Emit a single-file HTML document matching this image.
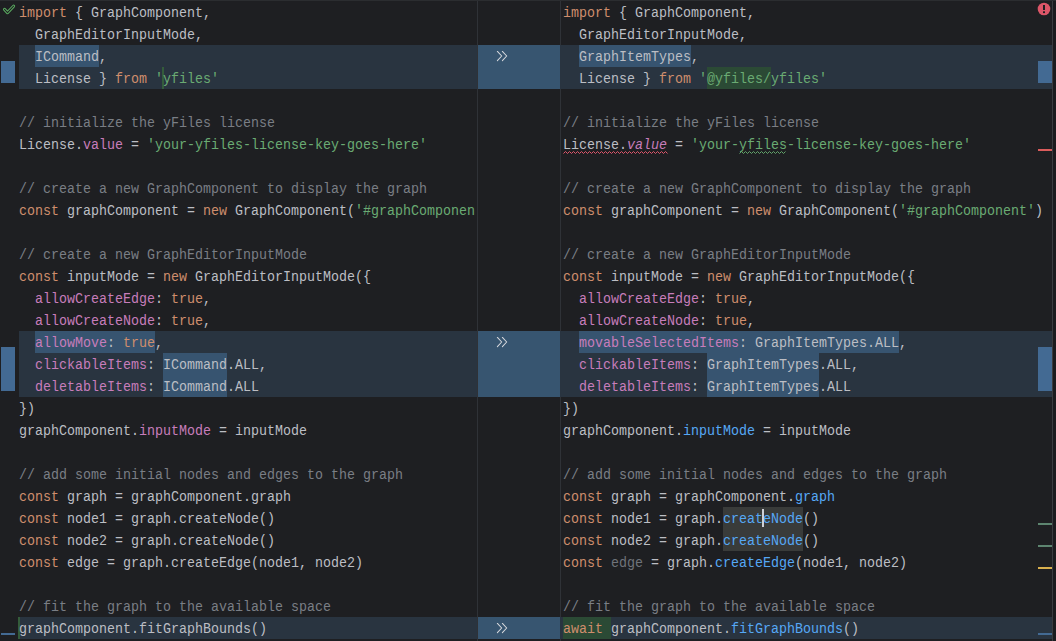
<!DOCTYPE html>
<html><head><meta charset="utf-8"><style>
html,body{margin:0;padding:0;}
body{width:1056px;height:641px;overflow:hidden;background:#1e1f22;position:relative;}
#bg div{position:absolute;}
.pane{position:absolute;top:0;height:641px;overflow:hidden;}
.ln{position:absolute;left:0;height:22px;line-height:22px;transform:translateY(2px) scaleY(1.12);transform-origin:0 15px;white-space:pre;font-family:"Liberation Mono",monospace;font-size:13.333px;color:#bcbec4;}
.ln span{}
.t{color:#bcbec4} .k{color:#cf8e6d} .s{color:#6aab73} .c{color:#7a7e85} .p{color:#c77dbb} .f{color:#56a8f5} .u{color:#6f737a}
.i{color:#c77dbb;font-style:italic}
</style></head><body>
<div id="bg"><div style="left:19px;top:45px;width:458px;height:44px;background:#293440;"></div><div style="left:560px;top:45px;width:492px;height:44px;background:#293440;"></div><div style="left:478px;top:45px;width:82px;height:44px;background:#375570;"></div><div style="left:19px;top:331px;width:458px;height:66px;background:#293440;"></div><div style="left:560px;top:331px;width:492px;height:66px;background:#293440;"></div><div style="left:478px;top:331px;width:82px;height:66px;background:#375570;"></div><div style="left:19px;top:617px;width:458px;height:22px;background:#293440;"></div><div style="left:560px;top:617px;width:492px;height:22px;background:#293440;"></div><div style="left:478px;top:617px;width:82px;height:22px;background:#375570;"></div><div style="left:35px;top:45px;width:64px;height:22px;background:#375470;"></div><div style="left:35px;top:331px;width:120px;height:22px;background:#375470;"></div><div style="left:163px;top:353px;width:64px;height:22px;background:#375470;"></div><div style="left:163px;top:375px;width:64px;height:22px;background:#375470;"></div><div style="left:579px;top:45px;width:112px;height:22px;background:#375470;"></div><div style="left:707px;top:67px;width:64px;height:22px;background:#2b4a35;"></div><div style="left:579px;top:331px;width:320px;height:22px;background:#375470;"></div><div style="left:707px;top:353px;width:112px;height:22px;background:#375470;"></div><div style="left:707px;top:375px;width:112px;height:22px;background:#375470;"></div><div style="left:723px;top:507px;width:80px;height:22px;background:#393b3a;"></div><div style="left:723px;top:529px;width:80px;height:22px;background:#393b3a;"></div><div style="left:563px;top:617px;width:48px;height:22px;background:#2b4a35;"></div><div style="left:162px;top:67px;width:2px;height:22px;background:#345c3b;"></div><div style="left:18px;top:617px;width:2px;height:22px;background:#345c3b;"></div><div style="left:477px;top:0px;width:1px;height:641px;background:#2f3237;"></div><div style="left:560px;top:0px;width:1px;height:641px;background:#2f3237;"></div><div style="left:1052px;top:0px;width:1px;height:641px;background:#3a3c40;"></div><div style="left:1053px;top:0px;width:3px;height:641px;background:#1b1c1f;"></div><div style="left:560px;top:45px;width:1px;height:44px;background:#293440;"></div><div style="left:560px;top:331px;width:1px;height:66px;background:#293440;"></div><div style="left:560px;top:617px;width:1px;height:22px;background:#293440;"></div><div style="left:0px;top:0px;width:1056px;height:1px;background:#2b2d30;"></div><div style="left:1px;top:61px;width:14px;height:22px;background:#436a93;"></div><div style="left:1px;top:347px;width:14px;height:44px;background:#436a93;"></div><div style="left:1px;top:633px;width:14px;height:2px;background:#436a93;"></div><div style="left:1038px;top:61px;width:14px;height:22px;background:#436a93;"></div><div style="left:1038px;top:347px;width:14px;height:44px;background:#436a93;"></div><div style="left:1038px;top:633px;width:14px;height:2px;background:#436a93;"></div><div style="left:1038px;top:149px;width:14px;height:2px;background:#db5c5c;"></div><div style="left:1038px;top:523px;width:14px;height:2px;background:#5d8570;"></div><div style="left:1038px;top:545px;width:14px;height:2px;background:#5d8570;"></div><div style="left:1038px;top:567px;width:14px;height:2px;background:#d9b04e;"></div></div>
<div class="pane" style="left:19px;width:456px"><div class="ln" style="top:1px"><span class="k">import</span><span class="t"> { GraphComponent,</span></div><div class="ln" style="top:23px"><span class="t">  GraphEditorInputMode,</span></div><div class="ln" style="top:45px"><span class="t">  ICommand,</span></div><div class="ln" style="top:67px"><span class="t">  License } </span><span class="k">from</span><span class="t"> </span><span class="s">&#x27;yfiles&#x27;</span></div><div class="ln" style="top:111px"><span class="c">// initialize the yFiles license</span></div><div class="ln" style="top:133px"><span class="t">License.</span><span class="p">value</span><span class="t"> = </span><span class="s">&#x27;your-yfiles-license-key-goes-here&#x27;</span></div><div class="ln" style="top:177px"><span class="c">// create a new GraphComponent to display the graph</span></div><div class="ln" style="top:199px"><span class="k">const</span><span class="t"> graphComponent = </span><span class="k">new</span><span class="t"> GraphComponent(</span><span class="s">&#x27;#graphComponent&#x27;</span><span class="t">)</span></div><div class="ln" style="top:243px"><span class="c">// create a new GraphEditorInputMode</span></div><div class="ln" style="top:265px"><span class="k">const</span><span class="t"> inputMode = </span><span class="k">new</span><span class="t"> GraphEditorInputMode({</span></div><div class="ln" style="top:287px"><span class="t">  </span><span class="p">allowCreateEdge</span><span class="t">: </span><span class="k">true</span><span class="t">,</span></div><div class="ln" style="top:309px"><span class="t">  </span><span class="p">allowCreateNode</span><span class="t">: </span><span class="k">true</span><span class="t">,</span></div><div class="ln" style="top:331px"><span class="t">  </span><span class="p">allowMove</span><span class="t">: </span><span class="k">true</span><span class="t">,</span></div><div class="ln" style="top:353px"><span class="t">  </span><span class="p">clickableItems</span><span class="t">: ICommand.ALL,</span></div><div class="ln" style="top:375px"><span class="t">  </span><span class="p">deletableItems</span><span class="t">: ICommand.ALL</span></div><div class="ln" style="top:397px"><span class="t">})</span></div><div class="ln" style="top:419px"><span class="t">graphComponent.</span><span class="p">inputMode</span><span class="t"> = inputMode</span></div><div class="ln" style="top:463px"><span class="c">// add some initial nodes and edges to the graph</span></div><div class="ln" style="top:485px"><span class="k">const</span><span class="t"> graph = graphComponent.graph</span></div><div class="ln" style="top:507px"><span class="k">const</span><span class="t"> node1 = graph.createNode()</span></div><div class="ln" style="top:529px"><span class="k">const</span><span class="t"> node2 = graph.createNode()</span></div><div class="ln" style="top:551px"><span class="k">const</span><span class="t"> edge = graph.createEdge(node1, node2)</span></div><div class="ln" style="top:595px"><span class="c">// fit the graph to the available space</span></div><div class="ln" style="top:617px"><span class="t">graphComponent.fitGraphBounds()</span></div></div>
<div class="pane" style="left:563px;width:489px"><div class="ln" style="top:1px"><span class="k">import</span><span class="t"> { GraphComponent,</span></div><div class="ln" style="top:23px"><span class="t">  GraphEditorInputMode,</span></div><div class="ln" style="top:45px"><span class="t">  GraphItemTypes,</span></div><div class="ln" style="top:67px"><span class="t">  License } </span><span class="k">from</span><span class="t"> </span><span class="s">&#x27;@yfiles/yfiles&#x27;</span></div><div class="ln" style="top:111px"><span class="c">// initialize the yFiles license</span></div><div class="ln" style="top:133px"><span class="t">License.</span><span class="i">value</span><span class="t"> = </span><span class="s">&#x27;your-yfiles-license-key-goes-here&#x27;</span></div><div class="ln" style="top:177px"><span class="c">// create a new GraphComponent to display the graph</span></div><div class="ln" style="top:199px"><span class="k">const</span><span class="t"> graphComponent = </span><span class="k">new</span><span class="t"> GraphComponent(</span><span class="s">&#x27;#graphComponent&#x27;</span><span class="t">)</span></div><div class="ln" style="top:243px"><span class="c">// create a new GraphEditorInputMode</span></div><div class="ln" style="top:265px"><span class="k">const</span><span class="t"> inputMode = </span><span class="k">new</span><span class="t"> GraphEditorInputMode({</span></div><div class="ln" style="top:287px"><span class="t">  </span><span class="p">allowCreateEdge</span><span class="t">: </span><span class="k">true</span><span class="t">,</span></div><div class="ln" style="top:309px"><span class="t">  </span><span class="p">allowCreateNode</span><span class="t">: </span><span class="k">true</span><span class="t">,</span></div><div class="ln" style="top:331px"><span class="t">  </span><span class="p">movableSelectedItems</span><span class="t">: GraphItemTypes.ALL,</span></div><div class="ln" style="top:353px"><span class="t">  </span><span class="p">clickableItems</span><span class="t">: GraphItemTypes.ALL,</span></div><div class="ln" style="top:375px"><span class="t">  </span><span class="p">deletableItems</span><span class="t">: GraphItemTypes.ALL</span></div><div class="ln" style="top:397px"><span class="t">})</span></div><div class="ln" style="top:419px"><span class="t">graphComponent.</span><span class="f">inputMode</span><span class="t"> = inputMode</span></div><div class="ln" style="top:463px"><span class="c">// add some initial nodes and edges to the graph</span></div><div class="ln" style="top:485px"><span class="k">const</span><span class="t"> graph = graphComponent.</span><span class="f">graph</span></div><div class="ln" style="top:507px"><span class="k">const</span><span class="t"> node1 = graph.</span><span class="f">createNode</span><span class="t">()</span></div><div class="ln" style="top:529px"><span class="k">const</span><span class="t"> node2 = graph.</span><span class="f">createNode</span><span class="t">()</span></div><div class="ln" style="top:551px"><span class="k">const</span><span class="t"> </span><span class="u">edge</span><span class="t"> = graph.</span><span class="f">createEdge</span><span class="t">(node1, node2)</span></div><div class="ln" style="top:595px"><span class="c">// fit the graph to the available space</span></div><div class="ln" style="top:617px"><span class="k">await</span><span class="t"> graphComponent.</span><span class="f">fitGraphBounds</span><span class="t">()</span></div></div>
<svg style="position:absolute;left:496px;top:51px" width="12" height="11" viewBox="0 0 12 11"><path d="M1.4 0.4 L5.7 5 L1.4 9.6 M6.4 0.4 L10.7 5 L6.4 9.6" fill="none" stroke="#d8dade" stroke-width="1.05" stroke-linecap="round" stroke-linejoin="round"/></svg><svg style="position:absolute;left:496px;top:337px" width="12" height="11" viewBox="0 0 12 11"><path d="M1.4 0.4 L5.7 5 L1.4 9.6 M6.4 0.4 L10.7 5 L6.4 9.6" fill="none" stroke="#d8dade" stroke-width="1.05" stroke-linecap="round" stroke-linejoin="round"/></svg><svg style="position:absolute;left:496px;top:623px" width="12" height="11" viewBox="0 0 12 11"><path d="M1.4 0.4 L5.7 5 L1.4 9.6 M6.4 0.4 L10.7 5 L6.4 9.6" fill="none" stroke="#d8dade" stroke-width="1.05" stroke-linecap="round" stroke-linejoin="round"/></svg>
<svg style="position:absolute;left:0px;top:0px" width="18" height="18" viewBox="0 0 18 18"><path d="M4.5 9.4 L7.5 12.6 L13.6 6.2" fill="none" stroke="#5cae62" stroke-width="3.0" stroke-linecap="round" stroke-linejoin="round"/><path d="M4.5 9.4 L7.5 12.6 L13.6 6.2" fill="none" stroke="#1e1f22" stroke-width="1.1" stroke-linecap="round" stroke-linejoin="round"/></svg><svg style="position:absolute;left:1037px;top:2px" width="14" height="14" viewBox="0 0 14 14"><circle cx="7" cy="7" r="6.3" fill="#dc5668"/><rect x="6" y="3" width="2" height="5" fill="#1e1f22"/><rect x="6" y="9.3" width="2" height="1.8" fill="#1e1f22"/></svg><div style="left:762px;top:509px;width:2px;height:18px;background:#ced0d6;position:absolute;"></div><svg style="position:absolute;left:563px;top:150px" width="105" height="5" viewBox="0 0 105 5"><path d="M0.5 3.5 L2.5 1.5 L4.5 3.5 L6.5 1.5 L8.5 3.5 L10.5 1.5 L12.5 3.5 L14.5 1.5 L16.5 3.5 L18.5 1.5 L20.5 3.5 L22.5 1.5 L24.5 3.5 L26.5 1.5 L28.5 3.5 L30.5 1.5 L32.5 3.5 L34.5 1.5 L36.5 3.5 L38.5 1.5 L40.5 3.5 L42.5 1.5 L44.5 3.5 L46.5 1.5 L48.5 3.5 L50.5 1.5 L52.5 3.5 L54.5 1.5 L56.5 3.5 L58.5 1.5 L60.5 3.5 L62.5 1.5 L64.5 3.5 L66.5 1.5 L68.5 3.5 L70.5 1.5 L72.5 3.5 L74.5 1.5 L76.5 3.5 L78.5 1.5 L80.5 3.5 L82.5 1.5 L84.5 3.5 L86.5 1.5 L88.5 3.5 L90.5 1.5 L92.5 3.5 L94.5 1.5 L96.5 3.5 L98.5 1.5 L100.5 3.5 L102.5 1.5 L104.5 3.5" fill="none" stroke="#e0566b" stroke-width="1"/></svg><svg style="position:absolute;left:739px;top:150px" width="48" height="5" viewBox="0 0 48 5"><path d="M0.5 3.5 L2.5 1.5 L4.5 3.5 L6.5 1.5 L8.5 3.5 L10.5 1.5 L12.5 3.5 L14.5 1.5 L16.5 3.5 L18.5 1.5 L20.5 3.5 L22.5 1.5 L24.5 3.5 L26.5 1.5 L28.5 3.5 L30.5 1.5 L32.5 3.5 L34.5 1.5 L36.5 3.5 L38.5 1.5 L40.5 3.5 L42.5 1.5 L44.5 3.5 L46.5 1.5" fill="none" stroke="#62a46a" stroke-width="1"/></svg>
</body></html>
